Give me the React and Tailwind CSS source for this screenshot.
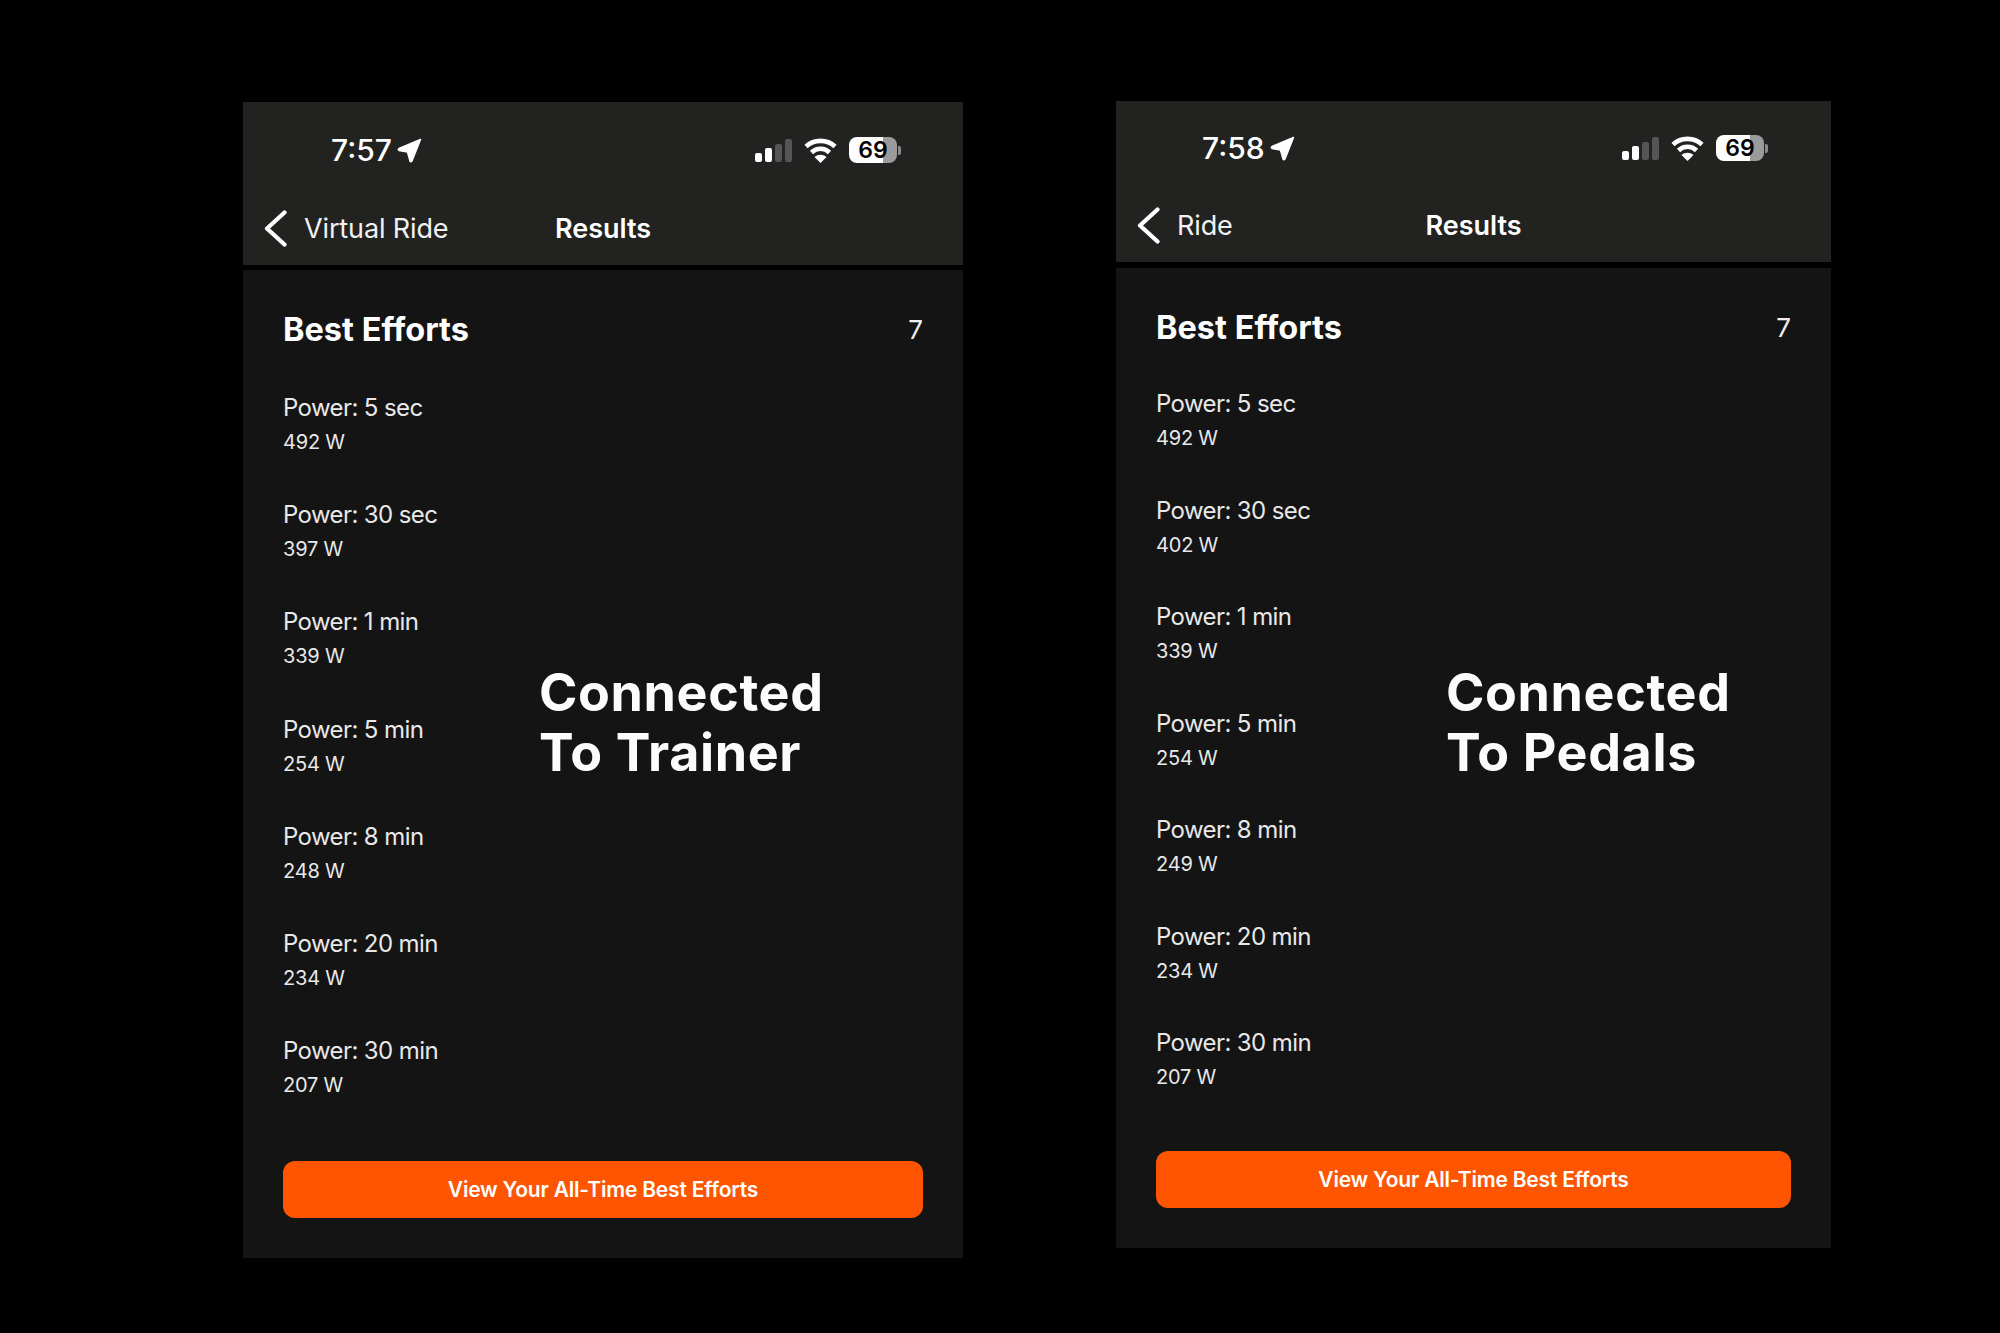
import React from 'react';

const NavArrow = () => (
    <svg width="25" height="25" viewBox="0 0 25 25" className="ml-[5px]">
        <path d="M23.5 1.5 L2 10.5 Q0.5 11.5 2 12.5 L10.5 14 L13 23 Q13.5 24.5 15 23 Z" fill="#fff" stroke="#fff" strokeWidth="1.5" strokeLinejoin="round" />
    </svg>
);

const Signal = () => (
    <div className="flex items-end gap-[3px] h-[24px]">
        <div className="w-[7px] h-[9px] rounded-[2px] bg-white" />
        <div className="w-[7px] h-[14px] rounded-[2px] bg-white" />
        <div className="w-[7px] h-[18px] rounded-[2px] bg-[#555555]" />
        <div className="w-[7px] h-[23px] rounded-[2px] bg-[#555555]" />
    </div>
);

const Wifi = () => (
    <svg width="33" height="25" viewBox="0 0 33 25" fill="none" stroke="#fff" strokeWidth="4.6">
        <path d="M2 8.5 C10 1 23 1 31 8.5" />
        <path d="M7.5 14.5 C12.5 9.5 20.5 9.5 25.5 14.5" />
        <path d="M16.5 25 L10.5 19 C14 16 19 16 22.5 19 Z" fill="#fff" stroke="none" />
    </svg>
);

const Battery = () => (
    <div className="flex items-center">
        <div className="w-[48px] h-[26px] rounded-[8px] overflow-hidden flex items-center justify-center text-black text-[23px] font-semibold leading-none bg-[linear-gradient(90deg,#ffffff_70%,#9b9b9b_70%)]">
            69
        </div>
        <div className="w-[3px] h-[9px] ml-[1px] rounded-r-[2px] bg-[#8a8a8a]" />
    </div>
);

const Chevron = () => (
    <svg width="24" height="37" viewBox="0 0 24 37" fill="none" stroke="#fff" strokeWidth="4.2" strokeLinecap="round" strokeLinejoin="round">
        <path d="M20.5 2.5 L3 18.5 L20.5 34.5" />
    </svg>
);

const Phone = ({ time, back, efforts, label, phoneClass, statusClass, navClass, headerClass, bodyClass, listClass, rowClass, labelClass }) => (
    <div className={phoneClass}>
        <div className={headerClass}>
            <div className={statusClass}>
                <div className="flex items-center text-[30px] font-medium text-white leading-none">
                    {time}
                    <NavArrow />
                </div>
                <div className="flex items-center">
                    <Signal />
                    <div className="ml-[12px] mr-[12px]"><Wifi /></div>
                    <Battery />
                </div>
            </div>
            <div className={navClass}>
                <Chevron />
                <span className="ml-[16px] text-[27px] tracking-[-0.005em] text-[#f1f1f1] leading-none">{back}</span>
                <span className="absolute inset-x-0 text-center text-[27px] font-semibold text-white leading-none">Results</span>
            </div>
        </div>
        <div className={bodyClass}>
            <div className="flex items-center justify-between h-[40px]">
                <span className="text-[32.5px] font-bold text-white leading-none">Best Efforts</span>
                <span className="text-[26px] text-[#eeeeee] leading-none">7</span>
            </div>
            <div className="flex">
                <div className={listClass}>
                    {efforts.map((e) => (
                        <div key={e.name} className={rowClass}>
                            <div className="text-[24px] tracking-[-0.025em] text-[#e8e8e8] leading-[34px]">{e.name}</div>
                            <div className="text-[20px] tracking-[-0.01em] text-[#e8e8e8] leading-[34px]">{e.watts}</div>
                        </div>
                    ))}
                </div>
                <div className={labelClass}>
                    <div>Connected</div>
                    <div>To {label}</div>
                </div>
            </div>
            <button className="mt-auto h-[57px] w-full rounded-[12px] bg-[#ff5500] text-white text-[21px] tracking-[-0.01em] font-semibold">
                View Your All-Time Best Efforts
            </button>
        </div>
    </div>
);

const trainerEfforts = [
    { name: 'Power: 5 sec', watts: '492 W' },
    { name: 'Power: 30 sec', watts: '397 W' },
    { name: 'Power: 1 min', watts: '339 W' },
    { name: 'Power: 5 min', watts: '254 W' },
    { name: 'Power: 8 min', watts: '248 W' },
    { name: 'Power: 20 min', watts: '234 W' },
    { name: 'Power: 30 min', watts: '207 W' },
];

const pedalEfforts = [
    { name: 'Power: 5 sec', watts: '492 W' },
    { name: 'Power: 30 sec', watts: '402 W' },
    { name: 'Power: 1 min', watts: '339 W' },
    { name: 'Power: 5 min', watts: '254 W' },
    { name: 'Power: 8 min', watts: '249 W' },
    { name: 'Power: 20 min', watts: '234 W' },
    { name: 'Power: 30 min', watts: '207 W' },
];

export default function App() {
    return (
        <div className="min-h-screen bg-black flex items-start pl-[243px] gap-[153px] font-['Inter',sans-serif]">
            <Phone
                time="7:57"
                back="Virtual Ride"
                label="Trainer"
                efforts={trainerEfforts}
                phoneClass="w-[720px] mt-[102px] flex flex-col gap-[5px]"
                headerClass="h-[163px] bg-[#222221] flex flex-col"
                statusClass="flex items-center justify-between h-[24px] mt-[36px] pl-[88px] pr-[62px]"
                navClass="relative flex items-center h-[37px] mt-[48px] pl-[21px]"
                bodyClass="h-[988px] bg-[#141414] flex flex-col px-[40px] pt-[40px] pb-[40px]"
                listClass="w-[256px] pt-[41px]"
                rowClass="h-[107.2px]"
                labelClass="self-center mb-[46px] text-[52px] font-bold leading-[60px] tracking-[0.012em] text-[#fdfbfb]"
            />
            <Phone
                time="7:58"
                back="Ride"
                label="Pedals"
                efforts={pedalEfforts}
                phoneClass="w-[715px] mt-[101px] flex flex-col gap-[6px]"
                headerClass="h-[161px] bg-[#222221] flex flex-col"
                statusClass="flex items-center justify-between h-[24px] mt-[35px] pl-[86px] pr-[63px]"
                navClass="relative flex items-center h-[37px] mt-[47px] pl-[21px]"
                bodyClass="h-[980px] bg-[#141414] flex flex-col px-[40px] pt-[40px] pb-[40px]"
                listClass="w-[290px] pt-[39px]"
                rowClass="h-[106.5px]"
                labelClass="self-center mb-[34px] text-[52px] font-bold leading-[60px] tracking-[0.012em] text-[#fdfbfb]"
            />
        </div>
    );
}
